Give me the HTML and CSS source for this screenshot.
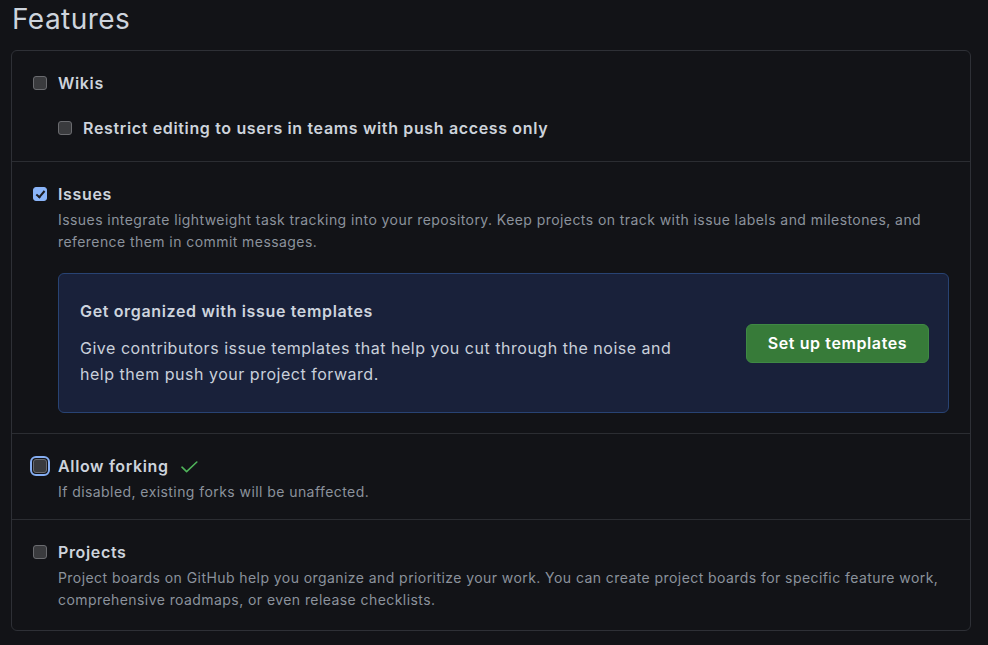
FILE: index.html
```html
<!DOCTYPE html>
<html lang="en">
<head>
<meta charset="utf-8">
<title>Features</title>
<link rel="stylesheet" href="styles.css">
</head>
<body>
<h2 class="page-title">Features</h2>
<div class="panel">
  <div class="row row-first">
    <label class="option">
      <input type="checkbox" class="cb">
      <span class="title">Wikis</span>
    </label>
    <label class="option sub">
      <input type="checkbox" class="cb">
      <span class="title">Restrict editing to users in teams with push access only</span>
    </label>
  </div>
  <div class="row">
    <label class="option">
      <input type="checkbox" class="cb" checked>
      <span class="title">Issues</span>
    </label>
    <p class="desc">Issues integrate lightweight task tracking into your repository. Keep projects on track with issue labels and milestones, and reference them in commit messages.</p>
    <div class="promo">
      <div class="promo-text">
        <h3 class="promo-title">Get organized with issue templates</h3>
        <p class="promo-body">Give contributors issue templates that help you cut through the noise and help them push your project forward.</p>
      </div>
      <button class="btn-primary" type="button">Set up templates</button>
    </div>
  </div>
  <div class="row row-short">
    <label class="option">
      <input type="checkbox" class="cb cb-focus">
      <span class="title">Allow forking</span>
      <svg class="ok-icon" width="17" height="12" viewBox="0 0 17 12" aria-hidden="true"><polyline points="1,6.2 5.6,10.6 15.8,1" fill="none" stroke="currentColor" stroke-width="1.6" stroke-linecap="round" stroke-linejoin="round"/></svg>
    </label>
    <p class="desc">If disabled, existing forks will be unaffected.</p>
  </div>
  <div class="row row-last">
    <label class="option">
      <input type="checkbox" class="cb">
      <span class="title">Projects</span>
    </label>
    <p class="desc">Project boards on GitHub help you organize and prioritize your work. You can create project boards for specific feature work, comprehensive roadmaps, or even release checklists.</p>
  </div>
</div>
</body>
</html>
```
FILE: styles.css
```css
* { box-sizing: border-box; }
html, body {
  margin: 0;
  padding: 0;
  background: #121317;
}
body {
  font-family: Inter, "Noto Sans", "Liberation Sans", sans-serif;
  color: #c9d1d9;
  padding: 0 17px 0 11px;
}
.page-title {
  margin: 0;
  height: 50px;
  padding: 1px 0 0 1px;
  font-size: 28px;
  font-weight: 400;
  line-height: 36px;
  letter-spacing: 0.45px;
  color: #cdd4dd;
}
.panel {
  border: 1px solid #2e3036;
  border-radius: 6px;
}
.row {
  padding: 20px 21px 20px 21px;
  border-top: 1px solid #2b2d32;
}
.row-first { border-top: 0; padding-bottom: 21px; }
.row-short { padding-bottom: 16px; }
.row-last { padding-bottom: 19px; }
.option {
  display: flex;
  align-items: center;
  height: 24px;
}
.option.sub {
  margin-top: 21px;
  padding-left: 25px;
}
.cb {
  appearance: none;
  -webkit-appearance: none;
  margin: 0 11px 0 0;
  width: 14px;
  height: 14px;
  flex: none;
  border: 1px solid #6a6b6f;
  border-radius: 3px;
  background: #3a3b3e;
  position: relative;
}
.cb:checked {
  background: #8ab4f8;
  border-color: #8ab4f8;
}
.cb:checked::after {
  content: "";
  position: absolute;
  left: 4px;
  top: 1px;
  width: 3px;
  height: 7px;
  border: solid #1b1c20;
  border-width: 0 2px 2px 0;
  transform: rotate(40deg);
}
.cb-focus {
  outline: 2px solid #86aef2;
  outline-offset: 1px;
}
.title {
  font-size: 16px;
  font-weight: 600;
  line-height: 24px;
  letter-spacing: 0.65px;
  color: #cdd3dc;
}
.ok-icon {
  color: #4fb35a;
  margin-left: 12px;
  margin-top: 1px;
}
.desc {
  margin: 3px 0 0 25px;
  font-size: 14px;
  line-height: 22px;
  letter-spacing: 0.43px;
  color: #8b929c;
}
.promo {
  margin: 20px 0 0 25px;
  display: flex;
  align-items: center;
  justify-content: space-between;
  padding: 25px 19px 25px 21px;
  background: #19213a;
  border: 1px solid #284373;
  border-radius: 6px;
}
.promo-title {
  margin: 0;
  font-size: 16px;
  font-weight: 600;
  line-height: 24px;
  letter-spacing: 0.65px;
  color: #cdd4de;
}
.promo-body {
  margin: 12px 0 0;
  font-size: 16px;
  line-height: 26px;
  letter-spacing: 0.52px;
  color: #c9d0da;
  max-width: 620px;
}
.btn-primary {
  flex: none;
  width: 183px;
  height: 39px;
  font-family: inherit;
  font-size: 16px;
  font-weight: 600;
  letter-spacing: 0.6px;
  color: #ffffff;
  background: #377b39;
  border: 1px solid #3f8944;
  border-radius: 6px;
  padding: 0;
}
```
